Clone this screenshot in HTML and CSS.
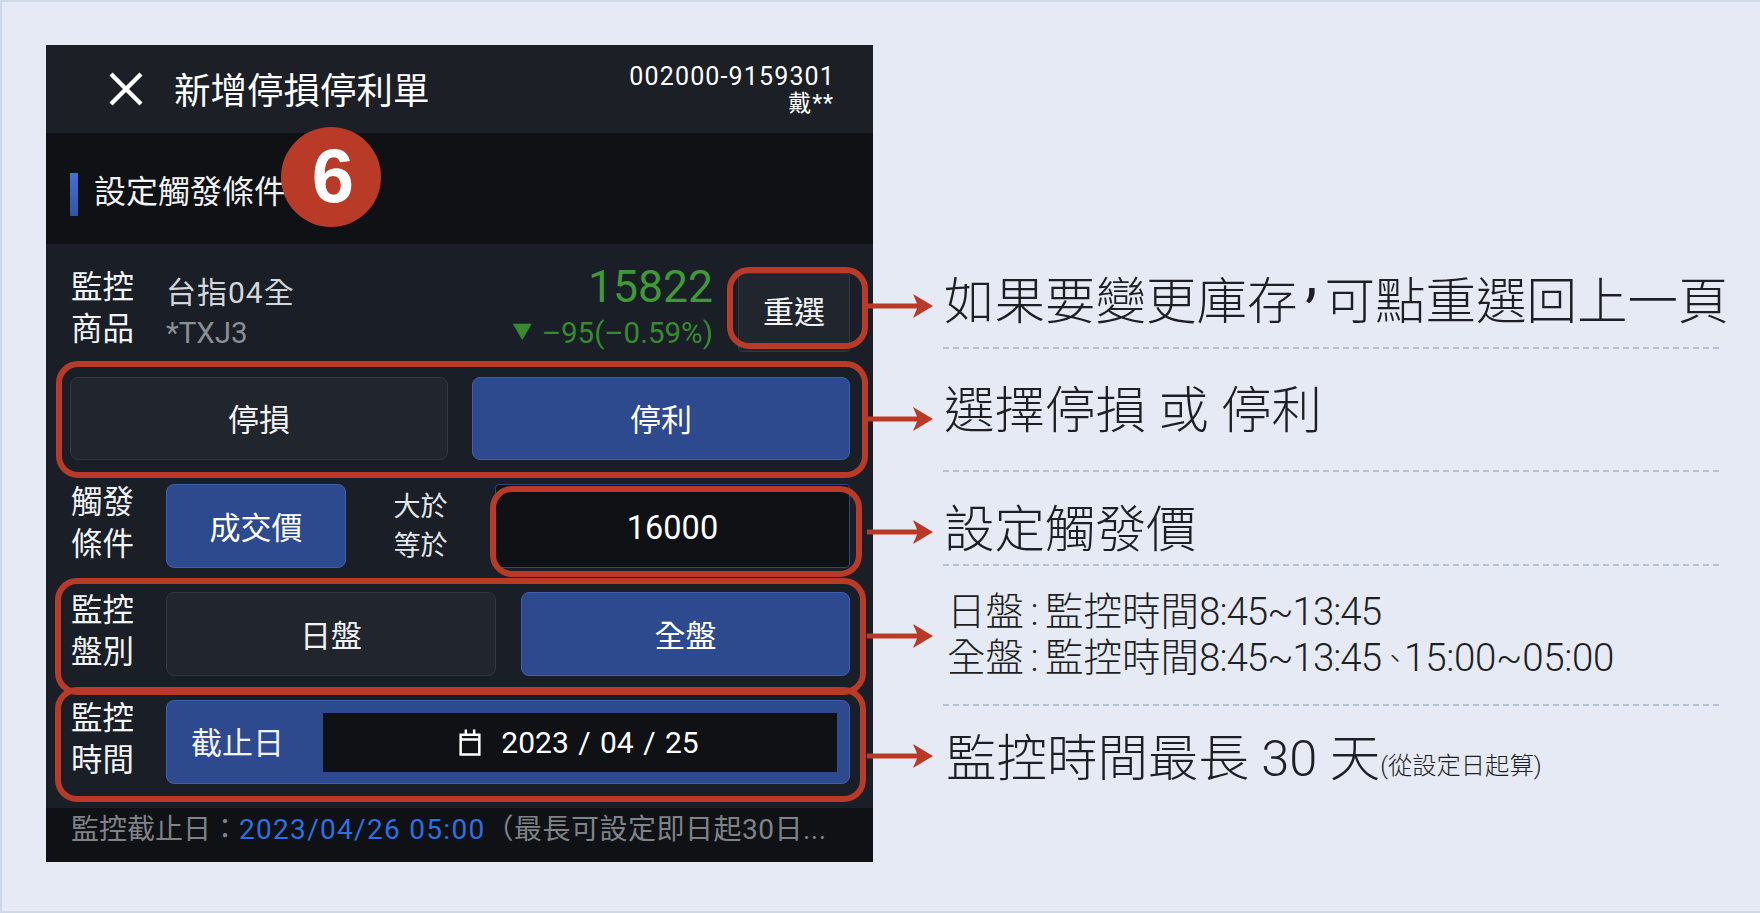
FILE: index.html
```html
<!DOCTYPE html>
<html lang="zh-Hant">
<head>
  <meta charset="UTF-8">
  <title>新增停損停利單</title>
  <link rel="stylesheet" href="styles.css">
</head>
<body>
  <div class="phone">
    <div class="top-bar">
      <svg class="close-icon" viewBox="0 0 34 34"><path d="M2 2 L32 32 M32 2 L2 32" fill="none" stroke="#fff" stroke-width="4.4"/></svg>
      <div class="top-title">新增停損停利單</div>
      <div class="account">
        <div class="account-no">002000-9159301</div>
        <div class="account-name">戴**</div>
      </div>
    </div>

    <div class="section-head">
      <span class="section-bar"></span>
      <span class="section-title">設定觸發條件</span>
      <span class="step-badge">6</span>
    </div>

    <div class="form">
      <div class="row row-product">
        <div class="label">監控<br>商品</div>
        <div class="product">
          <div class="product-name">台指04全</div>
          <div class="product-code">*TXJ3</div>
        </div>
        <div class="quote">
          <div class="quote-price">15822</div>
          <div class="quote-change"><span class="quote-arrow">▼</span> –95(–0.59%)</div>
        </div>
        <button class="btn btn-reset">重選</button>
      </div>

      <div class="row row-type">
        <button class="btn">停損</button>
        <button class="btn btn-on">停利</button>
      </div>

      <div class="row row-trigger">
        <div class="label">觸發<br>條件</div>
        <button class="btn btn-on">成交價</button>
        <div class="compare">大於<br>等於</div>
        <div class="price-input">16000</div>
      </div>

      <div class="row row-session">
        <div class="label">監控<br>盤別</div>
        <button class="btn">日盤</button>
        <button class="btn btn-on">全盤</button>
      </div>

      <div class="row row-date">
        <div class="label">監控<br>時間</div>
        <div class="date-field">
          <span class="date-label">截止日</span>
          <div class="date-box">
            <svg class="date-icon" viewBox="0 0 22 27"><path d="M2 6.5 H20 V25.5 H2 Z M2 11 H20 M7 1.5 V6 M15 1.5 V6" fill="none" stroke="#fff" stroke-width="2.4"/></svg>
            <span>2023 / 04 / 25</span>
          </div>
        </div>
      </div>
    </div>

    <div class="foot">監控截止日：<span class="foot-date">2023/04/26 05:00</span><span class="foot-rest">（最長可設定即日起30日...</span></div>
  </div>

  <div class="notes">
    <div class="note note-1">
      <svg class="arrow" viewBox="0 0 66 24"><path d="M0 9.5 H50 L46 0 L66 12 L46 24 L50 14.5 H0 Z" fill="#b93a26"/></svg>
      <div class="note-text">如果要變更庫存<span class="comma">,</span>可點重選回上一頁</div>
    </div>
    <div class="note note-2">
      <svg class="arrow" viewBox="0 0 66 24"><path d="M0 9.5 H50 L46 0 L66 12 L46 24 L50 14.5 H0 Z" fill="#b93a26"/></svg>
      <div class="note-text">選擇停損 或 停利</div>
    </div>
    <div class="note note-3">
      <svg class="arrow" viewBox="0 0 66 24"><path d="M0 9.5 H50 L46 0 L66 12 L46 24 L50 14.5 H0 Z" fill="#b93a26"/></svg>
      <div class="note-text">設定觸發價</div>
    </div>
    <div class="note note-4">
      <svg class="arrow" viewBox="0 0 66 24"><path d="M0 9.5 H50 L46 0 L66 12 L46 24 L50 14.5 H0 Z" fill="#b93a26"/></svg>
      <div class="note-text">日盤<span class="colon">:</span>監控時間<span class="num">8:45~13:45</span><br>全盤<span class="colon">:</span>監控時間<span class="num">8:45~13:45</span><span class="pause">、</span><span class="num-wide">15:00~05:00</span></div>
    </div>
    <div class="note note-5">
      <svg class="arrow" viewBox="0 0 66 24"><path d="M0 9.5 H50 L46 0 L66 12 L46 24 L50 14.5 H0 Z" fill="#b93a26"/></svg>
      <div class="note-text">監控時間最長 30 天<span class="note-tiny">(從設定日起算)</span></div>
    </div>
  </div>
</body>
</html>
```

FILE: styles.css
```css
body {
  width: 1760px;
  height: 913px;
  margin: 0;
  padding: 45px 0 0 46px;
  box-sizing: border-box;
  display: flex;
  align-items: flex-start;
  background: #e6eaf4;
  border: 1px solid #cfd8e6;
  border-width: 2px 0 2px 2px;
  font-family: "Noto Sans CJK TC", Roboto, sans-serif;
  overflow: hidden;
}

/* phone panel */
.phone {
  width: 827px;
  height: 817px;
  flex: none;
  display: flex;
  flex-direction: column;
  margin-top: -2px;
  margin-left: -2px;
  color: #fff;
  background: #191e27;
  font-family: Roboto, "Noto Sans CJK TC", sans-serif;
}

.top-bar {
  height: 88px;
  flex: none;
  display: flex;
  align-items: center;
  padding: 0 38px 0 63px;
  background: #1c1f25;
}

.close-icon {
  width: 34px;
  height: 34px;
  margin-right: 31px;
}

.top-title {
  flex: 1;
  margin-top: -2px;
  font-size: 36.5px;
  color: #fff;
}

.account {
  text-align: right;
  line-height: 25px;
  margin-top: 1px;
}

.account-no {
  font-size: 25px;
  letter-spacing: 1.15px;
}

.account-name {
  margin-top: 2px;
  margin-right: 1px;
  font-size: 23px;
  letter-spacing: 1px;
}

.section-head {
  height: 111px;
  flex: none;
  display: flex;
  align-items: center;
  padding: 12px 0 0 24px;
  box-sizing: border-box;
  background: #0f1115;
  position: relative;
}

.section-bar {
  width: 8px;
  height: 43px;
  margin-right: 16px;
  background: linear-gradient(180deg, #3f72dc, #2f55a8);
}

.section-title {
  margin-top: -11px;
  font-size: 32px;
  color: #f2f2f2;
}

.step-badge {
  position: absolute;
  left: 235px;
  top: -6px;
  width: 100px;
  height: 100px;
  padding-left: 4px;
  box-sizing: border-box;
  border-radius: 50%;
  background: #b93a26;
  color: #fff;
  font-family: "Liberation Sans", sans-serif;
  font-size: 76px;
  font-weight: bold;
  line-height: 98px;
  text-align: center;
}

.form {
  flex: 1;
  display: flex;
  flex-direction: column;
  gap: 24px;
  padding: 29px 23px 0 24px;
}

.row {
  display: grid;
  height: 84px;
  grid-template-rows: 100%;
  position: relative;
}

/* red outlines around the rows the notes point at */
.row-type::after,
.row-session::after,
.row-date::after,
.price-input::after,
.btn-reset::after {
  content: "";
  position: absolute;
  border: 6px solid #b93a26;
  border-radius: 22px;
  pointer-events: none;
  z-index: 2;
}

.row-type::after { left: -14px; right: -18px; top: -16px; bottom: -18px; }
.row-session::after { left: -15px; right: -16px; top: -14px; bottom: -19px; }
.row-date::after { left: -15px; right: -16px; top: -13px; bottom: -18px; }
.price-input::after { left: -6px; right: -13px; top: 1px; bottom: -10px; }
.btn-reset::after { left: -12px; right: -19px; top: -7px; bottom: 2px; }

.label {
  margin-left: 1px;
  margin-top: -4px;
  font-size: 31.5px;
  line-height: 42px;
  color: #f2f3f5;
  align-self: center;
}

.row-product {
  height: 79px;
  margin-bottom: 1px;
  grid-template-columns: 96px 1fr auto 112px;
}

.row-product .label {
  align-self: start;
  margin-top: -6px;
}

.product {
  margin-top: -1px;
}

.product-name {
  font-size: 30px;
  line-height: 42px;
  letter-spacing: 1px;
  color: #d4d6da;
}

.product-code {
  font-size: 29.5px;
  line-height: 38px;
  color: #8b8e94;
}

.quote {
  margin-right: 25px;
  margin-top: -12px;
  text-align: right;
  color: #3f9a35;
}

.quote-price {
  font-size: 44.5px;
  line-height: 52px;
}

.quote-change {
  font-size: 29.5px;
  line-height: 38px;
  color: #378a2e;
}

.quote-arrow {
  font-size: 20px;
  margin-right: 2px;
  vertical-align: 4px;
}

.btn {
  position: relative;
  padding: 0 0 2px;
  font-family: "Noto Sans CJK TC", sans-serif;
  font-size: 31px;
  color: #f2f3f5;
  background: #20252e;
  border: 1px solid #33383f;
  border-radius: 8px;
}

.btn-on {
  color: #fff;
  background: #2e4a8e;
  border-color: #3d5fb0;
}

.btn-reset {
  padding-bottom: 7px;
  border-radius: 4px;
}

.row-type {
  height: 83px;
  grid-template-columns: 1fr 1fr;
  gap: 24px;
}

.row-trigger {
  grid-template-columns: 96px 180px 149px 355px;
}

.compare {
  font-size: 27px;
  line-height: 39px;
  text-align: center;
  color: #e6e7ea;
  align-self: center;
  margin-top: 2px;
}

.price-input {
  position: relative;
  display: flex;
  align-items: center;
  justify-content: center;
  padding-top: 3px;
  font-size: 32.5px;
  background: #0f1115;
  border: 1px solid #2a4684;
  border-radius: 4px;
}

.row-session {
  grid-template-columns: 96px 330px 354px;
}

.row-session .btn-on {
  margin-left: 25px;
}

.row-date {
  grid-template-columns: 96px 1fr;
}

.date-field {
  display: flex;
  align-items: center;
  padding: 0 12px 0 24px;
  background: #2e4a8e;
  border: 1px solid #3d5fb0;
  border-radius: 8px;
}

.date-label {
  width: 132px;
  flex: none;
  margin-top: -4px;
  font-size: 31px;
  color: #f2f3f5;
}

.date-box {
  flex: 1;
  height: 59px;
  display: flex;
  align-items: center;
  justify-content: center;
  gap: 19px;
  padding-right: 3px;
  font-size: 30px;
  background: #0f1115;
  word-spacing: 2px;
}

.date-icon {
  width: 24px;
  height: 28px;
}

.foot {
  height: 54px;
  flex: none;
  padding: 1px 0 0 25px;
  box-sizing: border-box;
  font-size: 28px;
  line-height: 42px;
  color: #7f8388;
  background: #0f1115;
  white-space: nowrap;
}

.foot-date {
  color: #2f6fe0;
  letter-spacing: 1.3px;
}

.foot-rest {
  letter-spacing: 0.5px;
}

/* notes on the right */
.notes {
  margin-left: -6px;
  margin-top: 201px;
  position: relative;
  z-index: 3;
  display: flex;
  flex-direction: column;
  font-family: Roboto, "Noto Sans CJK TC", sans-serif;
  font-weight: 300;
  color: #1d1f24;
}

.note {
  display: flex;
}

.arrow {
  width: 66px;
  height: 24px;
  flex: none;
  margin-right: 10px;
  align-self: center;
}

.note-text {
  width: 776px;
  box-sizing: border-box;
  padding-left: 1px;
  font-size: 50.5px;
  line-height: 1;
  white-space: nowrap;
  border-bottom: 2px dashed #b5c2d6;
}

.note-1 { height: 101px; }
.note-1 .arrow { margin-top: 14px; }
.note-1 .note-text { padding-top: 25px; }

.note-2 { height: 123px; }
.note-2 .arrow { margin-top: 16px; }
.note-2 .note-text { padding-top: 37px; }

.note-3 { height: 94px; }
.note-3 .arrow { margin-top: 25px; }
.note-3 .note-text { padding-top: 33px; }

.note-4 { height: 140px; }
.note-4 .note-text {
  padding-top: 23px;
  padding-left: 4px;
  font-size: 38.5px;
  line-height: 46px;
}

.note-5 { height: 96px; }
.note-5 .arrow { margin-top: 4px; }
.note-5 .note-text {
  padding-top: 28px;
  padding-left: 3px;
  border-bottom: none;
}

.comma {
  display: inline-block;
  width: 20px;
  padding-right: 7px;
  text-align: right;
  position: relative;
  top: -24px;
  font-size: 62px;
  line-height: 50px;
  font-weight: 400;
}

.colon {
  display: inline-block;
  width: 21px;
  text-align: center;
}

.num {
  letter-spacing: -1px;
}

.num-wide {
  letter-spacing: -0.3px;
}

.pause {
  font-size: 28px;
  letter-spacing: -5px;
  vertical-align: 2px;
}

.note-tiny {
  font-size: 24.3px;
  vertical-align: 2px;
}
```
